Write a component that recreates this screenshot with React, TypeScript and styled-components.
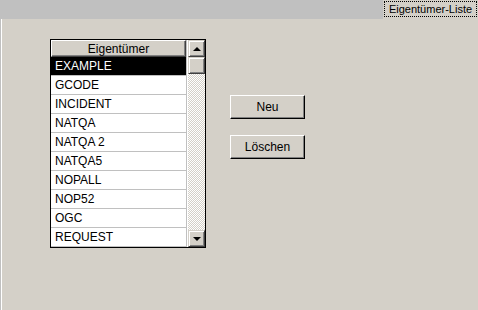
import React from 'react';
import styled, {createGlobalStyle} from 'styled-components';

const owners = ['EXAMPLE', 'GCODE', 'INCIDENT', 'NATQA', 'NATQA 2', 'NATQA5', 'NOPALL', 'NOP52', 'OGC', 'REQUEST'];

const GlobalStyle = createGlobalStyle`
  html, body {
    margin: 0;
    padding: 0;
    background: #d4d0c8;
  }
  body {
    font-family: "Liberation Sans", Arial, sans-serif;
    font-size: 11px;
    color: #000;
  }
`

export default function App() {
    return (
        <>
            <GlobalStyle/>
            <Screen>
                <TabStrip>
                    <Tab><TabLabel>Eigentümer-Liste</TabLabel></Tab>
                </TabStrip>
                <Panel>
                    <ListBox>
                        <ListColumn>
                            <Header>Eigentümer</Header>
                            {owners.map((name, i) => (
                                <Row key={name} selected={i === 0}>{name}</Row>
                            ))}
                        </ListColumn>
                        <ScrollBar>
                            <ScrollButton><Arrow dir="up"/></ScrollButton>
                            <Thumb/>
                            <Track/>
                            <ScrollButton><Arrow dir="down"/></ScrollButton>
                        </ScrollBar>
                    </ListBox>
                    <Buttons>
                        <Button>Neu</Button>
                        <Button>Löschen</Button>
                    </Buttons>
                </Panel>
            </Screen>
        </>
    );
}

const Screen = styled.div`
  width: 478px;
  height: 310px;
  display: flex;
  flex-direction: column;
  overflow: hidden;
`

const TabStrip = styled.div`
  height: 19px;
  background: #c0c0c0;
  display: flex;
  justify-content: flex-end;
  flex-shrink: 0;
`

const Tab = styled.div`
  width: 95px;
  height: 19px;
  background: #d4d0c8;
  box-sizing: border-box;
  padding: 1px 1px 2px 1px;
  display: flex;
`

const TabLabel = styled.div`
  flex: 1;
  border: 1px dotted #000;
  display: flex;
  align-items: center;
  justify-content: center;
  font-size: 11px;
  line-height: 1;
  white-space: nowrap;
  overflow: hidden;
`

const Panel = styled.div`
  flex: 1;
  display: flex;
  align-items: flex-start;
  padding: 20px 0 0 50px;
  box-shadow: inset 1px 0 #c0c0c0, inset 2px 0 #ffffff;
`

const ListBox = styled.div`
  width: 154px;
  height: 207px;
  border: 1px solid #000;
  display: flex;
  background: #fff;
  overflow: hidden;
`

const ListColumn = styled.div`
  width: 136px;
  display: flex;
  flex-direction: column;
  border-right: 1px solid #c0c0c0;
  box-sizing: border-box;
`

const Header = styled.div`
  height: 17px;
  flex-shrink: 0;
  box-sizing: border-box;
  background: #d4d0c8;
  border-top: 1px solid #fff;
  border-left: 1px solid #fff;
  border-right: 1px solid #404040;
  border-bottom: 1px solid #404040;
  box-shadow: inset -1px -1px #808080;
  display: flex;
  align-items: center;
  justify-content: center;
  font-size: 12px;
`

const Row = styled.div<{ selected?: boolean }>`
  height: 19px;
  flex-shrink: 0;
  box-sizing: border-box;
  border-bottom: 1px solid #c0c0c0;
  padding-left: 4px;
  display: flex;
  align-items: center;
  font-size: 12px;
  background: ${props => props.selected ? '#000' : '#fff'};
  color: ${props => props.selected ? '#fff' : '#000'};
`

const ScrollBar = styled.div`
  width: 18px;
  display: flex;
  flex-direction: column;
  padding-left: 1px;
  box-sizing: border-box;
  background: #fff;
`

const raised = `
  box-sizing: border-box;
  background: #d4d0c8;
  border-top: 1px solid #d4d0c8;
  border-left: 1px solid #d4d0c8;
  border-right: 1px solid #404040;
  border-bottom: 1px solid #404040;
  box-shadow: inset 1px 1px #fff, inset -1px -1px #808080;
`

const ScrollButton = styled.div`
  ${raised}
  height: 17px;
  flex-shrink: 0;
  display: flex;
  align-items: center;
  justify-content: center;
`

const Thumb = styled.div`
  ${raised}
  height: 17px;
  flex-shrink: 0;
`

const Track = styled.div`
  flex: 1;
  background-color: #fff;
  background-image: repeating-conic-gradient(#d4d0c8 0 25%, #fff 0 50%);
  background-size: 2px 2px;
`

const Arrow = styled.span<{ dir: 'up' | 'down' }>`
  width: 0;
  height: 0;
  border-left: 4px solid transparent;
  border-right: 4px solid transparent;
  ${props => props.dir === 'up'
    ? 'border-bottom: 4px solid #000;'
    : 'border-top: 4px solid #000;'}
`

const Buttons = styled.div`
  display: flex;
  flex-direction: column;
  gap: 16px;
  margin-left: 24px;
  padding-top: 56px;
`

const Button = styled.button`
  width: 75px;
  height: 24px;
  ${raised}
  border-top-color: #fff;
  border-left-color: #fff;
  border-right-color: #000;
  border-bottom-color: #000;
  box-shadow: inset -1px -1px #808080;
  font-family: "Liberation Sans", Arial, sans-serif;
  font-size: 12px;
  color: #000;
  padding: 0;
`
